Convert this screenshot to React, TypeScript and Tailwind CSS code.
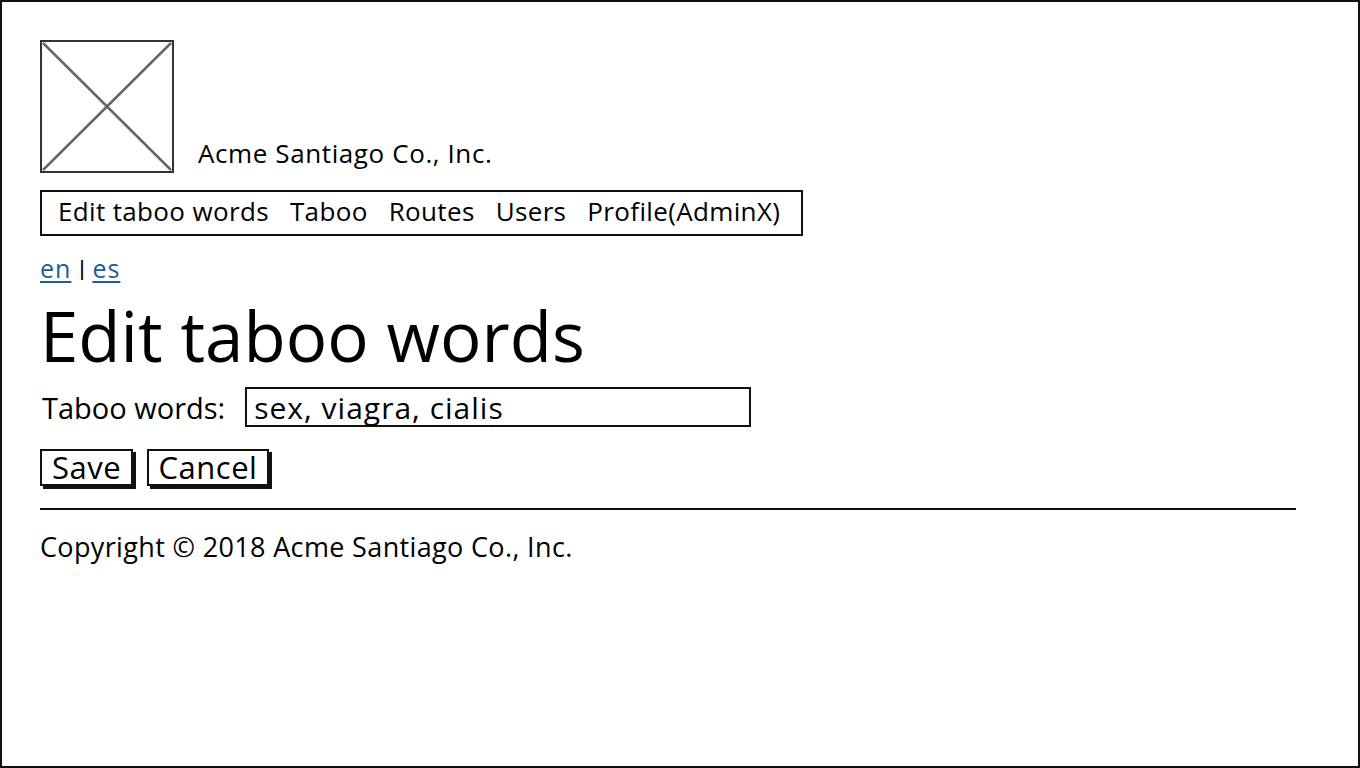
import React from 'react';

const font = { fontFamily: '"Open Sans", Lato, sans-serif' };

function ImagePlaceholder() {
    return (
        <div className="w-[134px] h-[133px] border-2 border-[#333] shrink-0">
            <svg className="w-full h-full" viewBox="0 0 130 129" preserveAspectRatio="none">
                <line x1="1" y1="1" x2="129" y2="128" stroke="#666" strokeWidth="2.5" />
                <line x1="129" y1="1" x2="1" y2="128" stroke="#666" strokeWidth="2.5" />
            </svg>
        </div>
    );
}

export default function App() {
    return (
        <div className="w-[1360px] h-[768px] bg-white border-2 border-[#111] text-black overflow-hidden" style={font}>
            <div className="pl-[38px] pt-[38px] flex flex-col items-start">
                <div className="flex items-end">
                    <ImagePlaceholder />
                    <span className="ml-[24px] mb-[7px] text-[26px] leading-none tracking-[0.6px]">Acme Santiago Co., Inc.</span>
                </div>

                <nav className="mt-[17px] w-[763px] h-[46px] border-2 border-[#111] flex items-center pl-[16px] pb-[5px] gap-[21px] text-[26px] leading-none tracking-[0.35px]">
                    <span>Edit taboo words</span>
                    <span>Taboo</span>
                    <span>Routes</span>
                    <span>Users</span>
                    <span>Profile(AdminX)</span>
                </nav>

                <div className="mt-[19px] flex items-center gap-[5px] text-[25px] leading-[26px]">
                    <a href="#" className="text-[#1f5c99] underline underline-offset-3 tracking-[1px]">en</a>
                    <span className="text-[20px] font-semibold">|</span>
                    <a href="#" className="text-[#1f5c99] underline underline-offset-3 tracking-[1px]">es</a>
                </div>

                <h1 className="mt-[18px] text-[69px] leading-[72px] font-normal">Edit taboo words</h1>

                <div className="mt-[16px] flex items-center">
                    <label className="ml-[2px] text-[29px] leading-none">Taboo words:</label>
                    <div className="ml-[20px] w-[506px] h-[40px] border-2 border-[#111] flex items-center px-[7px] text-[30px] tracking-[1px]">
                        sex, viagra, cialis
                    </div>
                </div>

                <div className="mt-[22px] flex gap-[14px]">
                    <button className="w-[93px] h-[37px] border-2 border-[#111] shadow-[3px_3px_0_#111] text-[31px] leading-none tracking-[0.5px] flex items-center justify-center">Save</button>
                    <button className="w-[122px] h-[37px] border-2 border-[#111] shadow-[3px_3px_0_#111] text-[31px] leading-none tracking-[0.5px] flex items-center justify-center">Cancel</button>
                </div>

                <hr className="mt-[22px] w-[1256px] border-t-2 border-[#111]" />

                <p className="mt-[23px] text-[27px] leading-none tracking-[0.35px]">Copyright © 2018 Acme Santiago Co., Inc.</p>
            </div>
        </div>
    );
}
